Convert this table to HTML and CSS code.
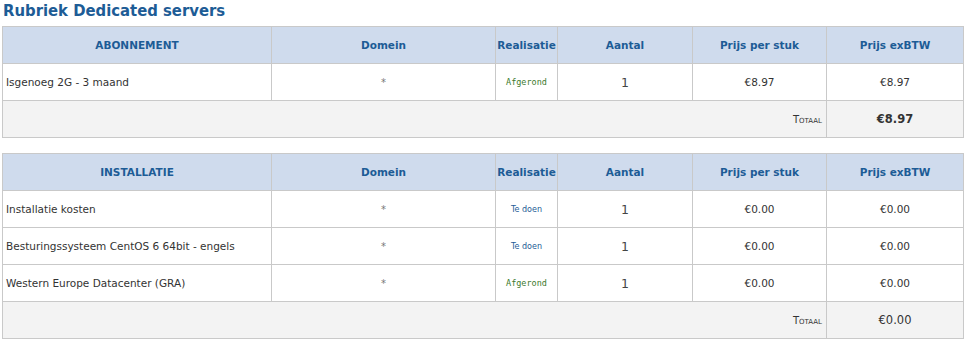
FILE: index.html
```html
<!DOCTYPE html>
<html>
<head>
<meta charset="utf-8">
<link rel="stylesheet" href="styles.css">
</head>
<body>
<h1 class="title">Rubriek Dedicated servers</h1>
<table class="grid">
  <colgroup><col class="c1"><col class="c2"><col class="c3"><col class="c4"><col class="c5"><col class="c6"></colgroup>
  <thead>
    <tr><th>ABONNEMENT</th><th>Domein</th><th>Realisatie</th><th>Aantal</th><th>Prijs per stuk</th><th>Prijs exBTW</th></tr>
  </thead>
  <tbody>
    <tr><td class="name">Isgenoeg 2G - 3 maand</td><td class="dom">*</td><td class="st done">Afgerond</td><td class="qty">1</td><td class="price">€8.97</td><td class="price">€8.97</td></tr>
    <tr class="total"><td colspan="5" class="tlabel">Totaal</td><td class="tval strong">€8.97</td></tr>
  </tbody>
</table>
<table class="grid second">
  <colgroup><col class="c1"><col class="c2"><col class="c3"><col class="c4"><col class="c5"><col class="c6"></colgroup>
  <thead>
    <tr><th>INSTALLATIE</th><th>Domein</th><th>Realisatie</th><th>Aantal</th><th>Prijs per stuk</th><th>Prijs exBTW</th></tr>
  </thead>
  <tbody>
    <tr><td class="name">Installatie kosten</td><td class="dom">*</td><td class="st todo">Te doen</td><td class="qty">1</td><td class="price">€0.00</td><td class="price">€0.00</td></tr>
    <tr><td class="name">Besturingssysteem CentOS 6 64bit - engels</td><td class="dom">*</td><td class="st todo">Te doen</td><td class="qty">1</td><td class="price">€0.00</td><td class="price">€0.00</td></tr>
    <tr><td class="name">Western Europe Datacenter (GRA)</td><td class="dom">*</td><td class="st done">Afgerond</td><td class="qty">1</td><td class="price">€0.00</td><td class="price">€0.00</td></tr>
    <tr class="total"><td colspan="5" class="tlabel">Totaal</td><td class="tval">€0.00</td></tr>
  </tbody>
</table>
</body>
</html>
```
FILE: styles.css
```css
html, body { margin: 0; padding: 0; background: #fff; }
body { padding: 0 2px; font-family: "DejaVu Sans", Verdana, sans-serif; font-size: 10.5px; color: #333; }
.title { margin: 0; padding: 0 0 0 1px; height: 26px; font-family: "DejaVu Sans Condensed", "DejaVu Sans", sans-serif; font-stretch: condensed; font-size: 16.5px; font-weight: bold; color: #1d5c96; line-height: 21px; }
.grid { width: 961px; border-collapse: collapse; table-layout: fixed; }
.grid.second { margin-top: 15px; }
.c1 { width: 269px; } .c2 { width: 224px; } .c3 { width: 62px; } .c4 { width: 135px; } .c5 { width: 134px; } .c6 { width: 137px; }
.grid th, .grid td { border: 1px solid #c9c9c9; height: 37px; padding: 0; box-sizing: border-box; }
.grid th { background: #cfdbed; color: #1d5c96; font-weight: bold; font-size: 10.5px; text-align: center; }
.grid td { text-align: center; }
.grid td.name { text-align: left; padding-left: 3px; color: #333; }
.dom { color: #777; font-size: 10px; }
.st { font-size: 8px; }
.done { color: #3c7a2e; font-family: "DejaVu Sans Mono", monospace; font-size: 8.5px; }
.todo { color: #1d5c96; }
.qty { font-size: 12.5px; color: #444; }
.price { color: #333; }
.total td { background: #f3f3f3; }
.tlabel { text-align: right !important; padding-right: 4px !important; font-variant: small-caps; font-size: 10px; color: #333; }
.tval { font-size: 11.5px; }
.tval.strong { font-weight: bold; }
```
